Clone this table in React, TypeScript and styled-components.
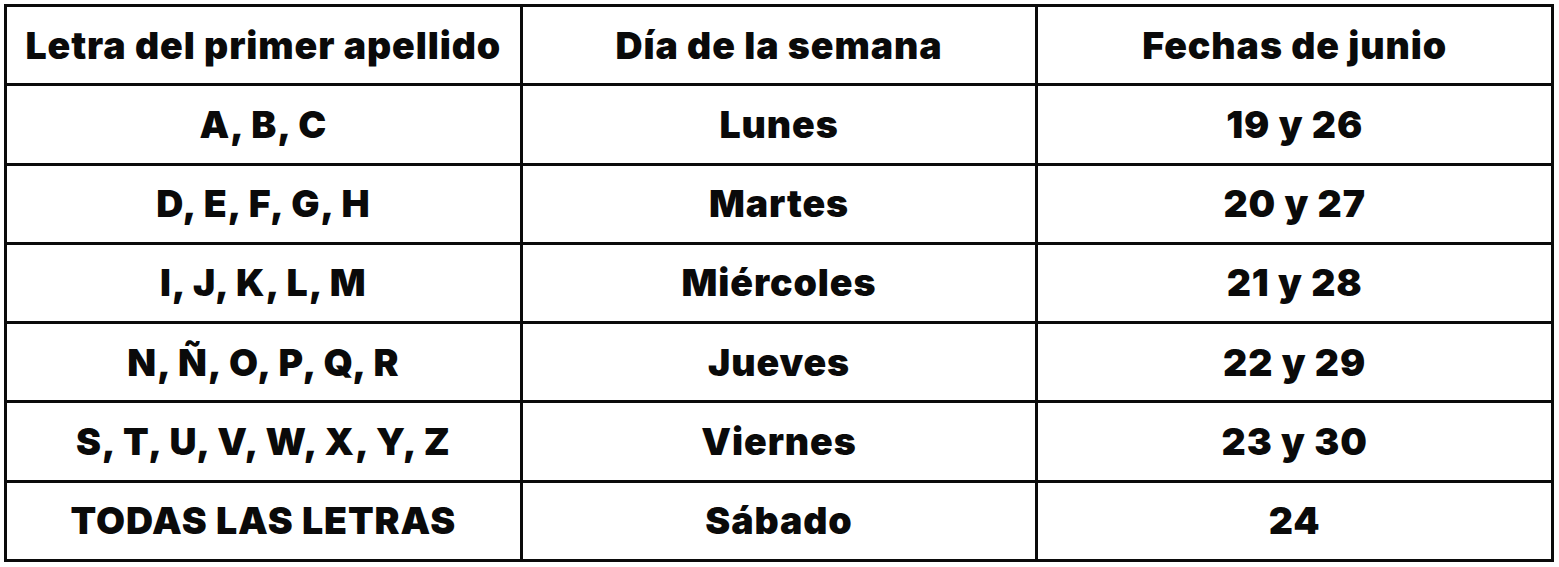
import React from "react";
import styled, { createGlobalStyle } from "styled-components";

const Global = createGlobalStyle`
  html, body { margin: 0; padding: 0; background: #ffffff; }
  body { font-family: "Inter", "Liberation Sans", sans-serif; }
`;

const Page = styled.div`
  padding: 4px 0 0 4px;
`;

const Grid = styled.div`
  width: 1550px;
  height: 558px;
  box-sizing: border-box;
  display: grid;
  grid-template-columns: repeat(3, 1fr);
  grid-template-rows: repeat(7, 1fr);
  gap: 3px;
  padding: 3px;
  background: #0b0b0b;
`;

const Cell = styled.div`
  background: #ffffff;
  display: flex;
  align-items: center;
  justify-content: center;
  font-family: "Inter", "Liberation Sans", sans-serif;
  font-weight: 900;
  font-size: 37.5px;
  letter-spacing: 0.9px;
  color: #0a0a0a;
  white-space: nowrap;
`;

const rows: [string, string, string][] = [
  ["Letra del primer apellido", "Día de la semana", "Fechas de junio"],
  ["A, B, C", "Lunes", "19 y 26"],
  ["D, E, F, G, H", "Martes", "20 y 27"],
  ["I, J, K, L, M", "Miércoles", "21 y 28"],
  ["N, Ñ, O, P, Q, R", "Jueves", "22 y 29"],
  ["S, T, U, V, W, X, Y, Z", "Viernes", "23 y 30"],
  ["TODAS LAS LETRAS", "Sábado", "24"],
];

export default function App() {
  return (
    <>
      <Global />
      <Page>
        <Grid>
          {rows.map((r, i) =>
            r.map((t, j) => <Cell key={`${i}-${j}`}>{t}</Cell>)
          )}
        </Grid>
      </Page>
    </>
  );
}
